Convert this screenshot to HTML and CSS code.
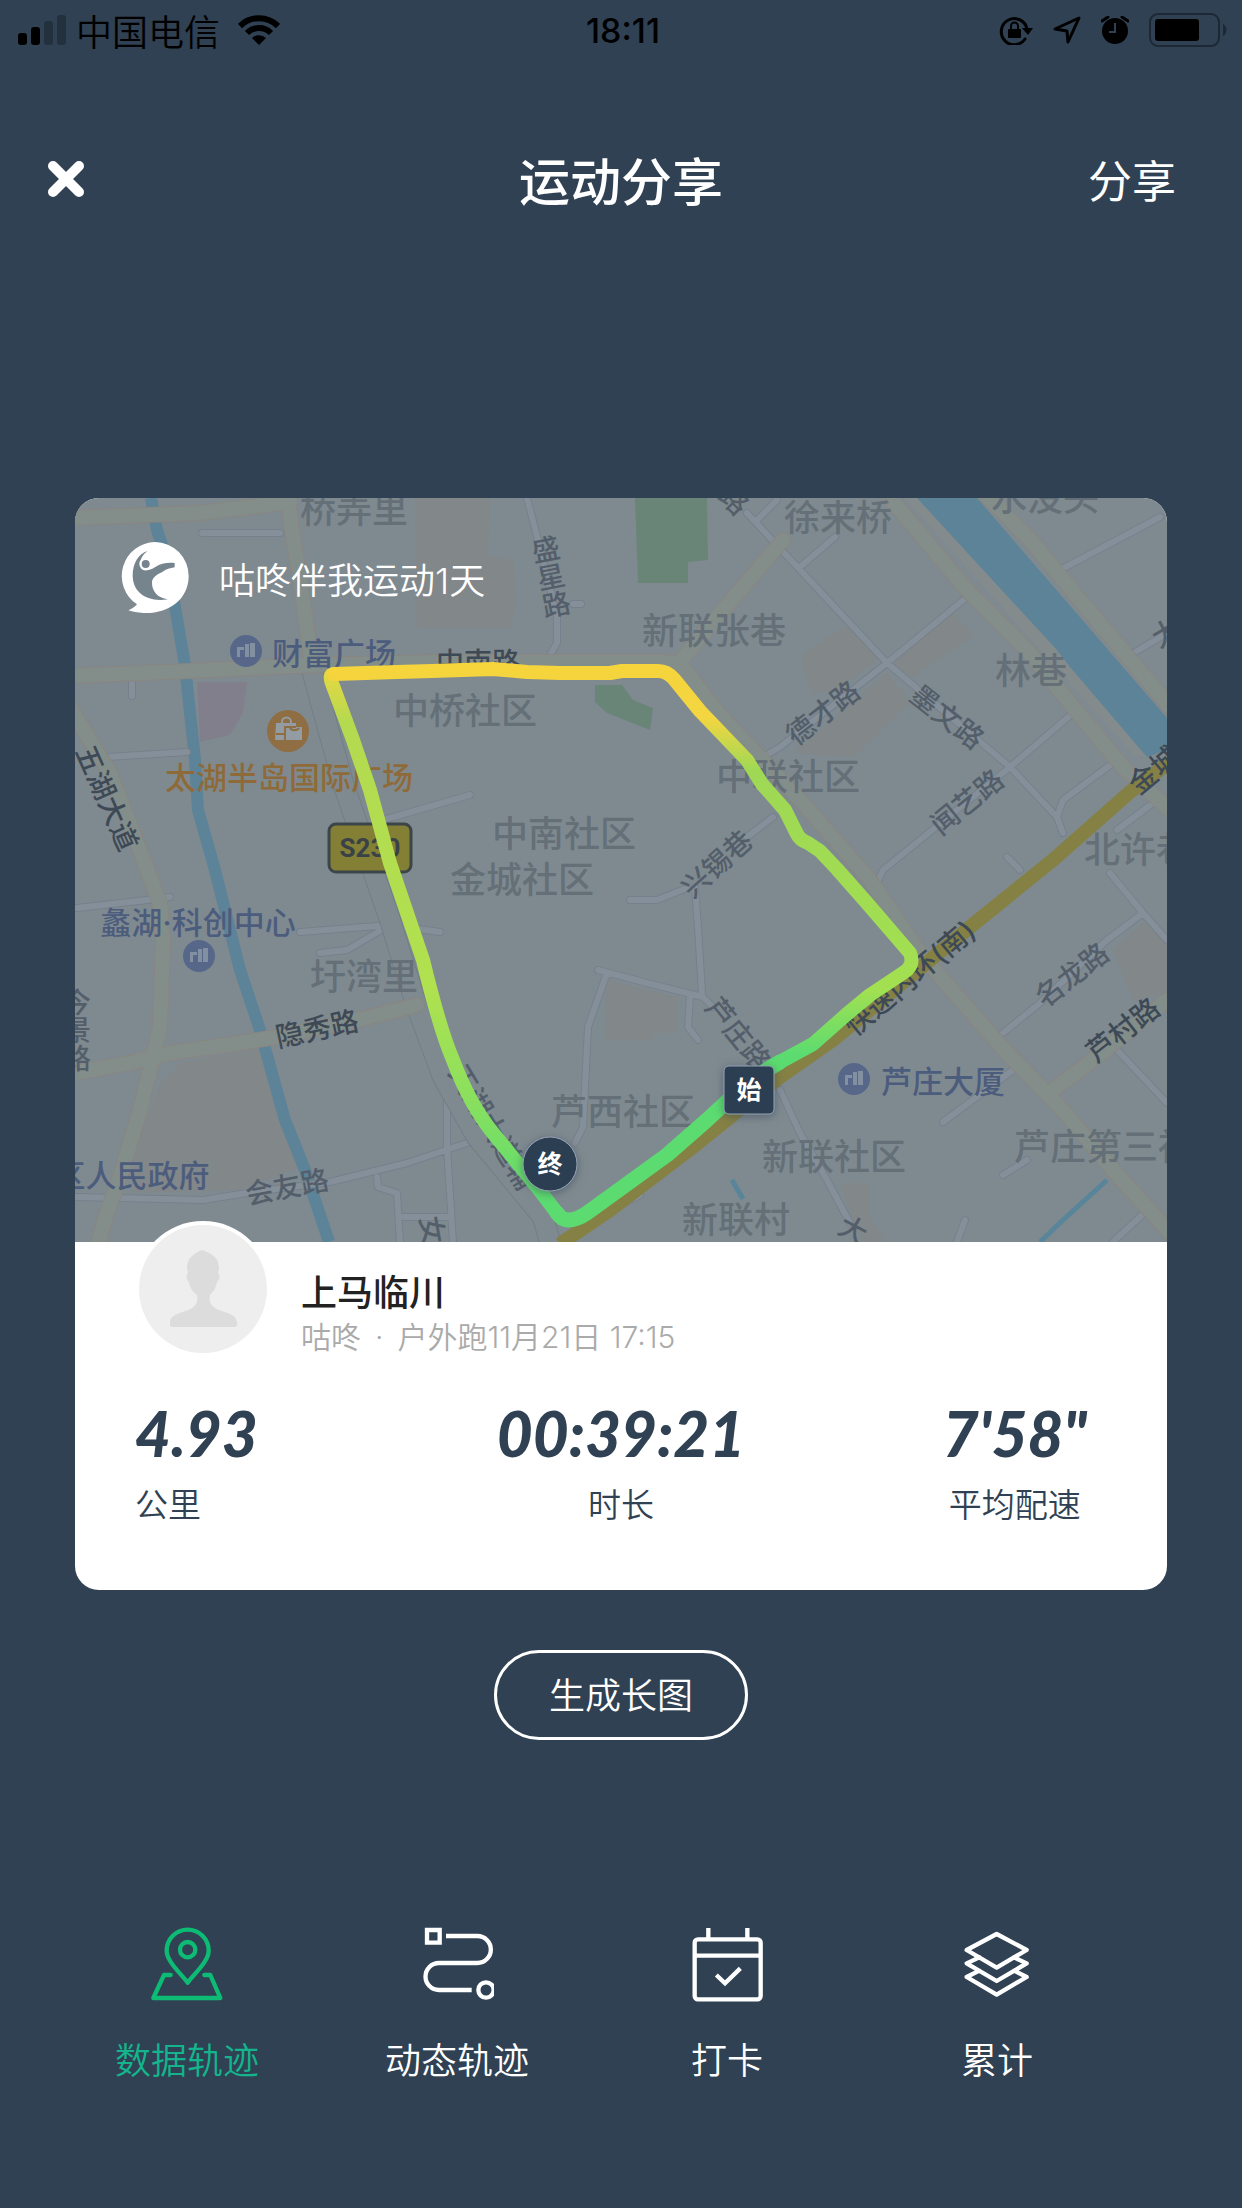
FILE: index.html
```html
<!doctype html>
<html lang="zh-CN">
<head>
	<meta charset="UTF-8">
	<meta name="viewport" content="width=device-width, initial-scale=1">
	<title>运动分享</title>
	<link rel="stylesheet" href="styles.css">
</head>
<body>
	<div class="status">
		<div class="status-left">
			<svg class="signal" viewBox="0 0 48 30" width="48" height="30">
				<rect x="0" y="18" width="9" height="12" rx="3"/>
				<rect x="13" y="12" width="9" height="18" rx="3"/>
				<rect class="off" x="26" y="6" width="9" height="24" rx="3"/>
				<rect class="off" x="39" y="0" width="9" height="30" rx="3"/>
			</svg>
			<span class="carrier">中国电信</span>
			<svg viewBox="0 0 42 30" width="42" height="30">
				<path d="M21 30l-7-7a10 10 0 0 1 14 0z"/>
				<path class="arc" d="M9 18a17 17 0 0 1 24 0M2 11a27 27 0 0 1 38 0"/>
			</svg>
		</div>
		<span class="time">18:11</span>
		<div class="status-right">
			<svg viewBox="0 0 34 30" width="34" height="30">
				<path class="line" d="M26 24A13 13 0 1 1 28 14"/>
				<path d="M23 13h11l-5 7z"/>
				<rect x="9" y="14" width="13" height="9" rx="1"/>
				<path class="thin" d="M12 14v-3a3 3 0 0 1 7 0v3"/>
			</svg>
			<svg class="locate" viewBox="0 0 28 28" width="28" height="28">
				<path class="line" d="M26 2L2 13l12 2 1 11z"/>
			</svg>
			<svg class="alarm" viewBox="0 0 28 28" width="28" height="28">
				<circle cx="14" cy="15" r="13"/>
				<path class="line" d="M1 5l6-4M27 5l-6-4"/>
				<path class="hand" d="M14 7v9H8"/>
			</svg>
			<svg class="battery" viewBox="0 0 79 34" width="79" height="34">
				<rect class="shell" x="1" y="1" width="69" height="32" rx="8"/>
				<rect x="6" y="6" width="44" height="22" rx="3"/>
				<path class="nub" d="M74 11a7 7 0 0 1 0 12z"/>
			</svg>
		</div>
	</div>

	<header class="nav">
		<button class="close" type="button" aria-label="关闭">
			<svg viewBox="0 0 36 36" width="36" height="36"><path d="M5 5l26 26M31 5L5 31"/></svg>
		</button>
		<h1>运动分享</h1>
		<button class="share" type="button">分享</button>
	</header>

	<main>
		<section class="card">
			<div class="map">
				<svg class="map-img" viewBox="75 498 1092 744">
					<defs>
						<linearGradient id="routeR" gradientUnits="userSpaceOnUse" x1="0" y1="670" x2="0" y2="1070">
							<stop offset="0" stop-color="#f5d43c"/>
							<stop offset=".12" stop-color="#f3d641"/>
							<stop offset=".25" stop-color="#9fd855"/>
							<stop offset=".8" stop-color="#a2e051"/>
							<stop offset=".96" stop-color="#5cdc70"/>
						</linearGradient>
						<linearGradient id="routeL" gradientUnits="userSpaceOnUse" x1="0" y1="670" x2="0" y2="1200">
							<stop offset="0" stop-color="#e8d842"/>
							<stop offset=".1" stop-color="#b4da50"/>
							<stop offset=".6" stop-color="#b0e14f"/>
							<stop offset=".8" stop-color="#8ce05d"/>
							<stop offset="1" stop-color="#5cdc70"/>
						</linearGradient>
						<g id="building">
							<circle r="16"/>
							<path d="M-9 6v-10h7v3h-4v7zM-1 6V-7h4V6zM4 6V-8h5V6z"/>
						</g>
						<path id="lanes" d="M527 498l11 42 19 77v26l-7 12M202 533h78M573 604h8M747 513l140 150 123 104 47 50 6 16M757 520l20-20M800 567l35-30M967 597l-80 66-107 84-17 10M1073 713l-63 54-127 103-6 13M1113 763l-50 37-6 17M1160 517l-100 53M1167 633l-40 24M1153 803l-36 27M1007 857l13 13M1110 873l33 40 24 27M1143 913l-36 27-67 63-37 30M1117 1050l50 53M943 1122l70-52M1003 1175l24-15M630 900h27l30-12M695 887l3 40 4 66M598 970l49 13 56 14 10 10M607 973l-19 54-5 100-8 16M690 997l-2 30 10 13M780 1090l20 43 27 47 23 43M773 817l-26 20M75 1197l128 3 44-7 83-11 77-19 63-21M447 1093v54l6 95M377 1177l1 10 19 6 3 49M403 1217h47M77 908l70-8 23-3M107 757l80-5M383 820l87-25M300 932l90-7 50 7M320 953l27-3 43-25M132 683v13M600 1215l40-20M1113 1242l30-28M957 1242l8-22"/>
						<path id="roads" d="M70 518l130-5 90-11M288 498l4 32 11 70 9 66M70 676l120-5 120-6 130-3h225l15 2 40 51 80 85 70 80 53 77 84 96 53 54 53 63 59 65M783 540l-60 70-43 52M890 498l77 92 60 60 46 57 50 60 50 46M985 494l48 49 47 57 90 107M68 704l42 69 27 70 23 60 3 40-3 84-7 30-13 53-20 67-13 36-9 30M75 1073l55-10 40-10 43-6 64-10 80-17 60-15M1053 1090l40-30 74-60"/>
						<path id="side" d="M312 670l31 113 47 137 27 87 26 70 34 60 66 80 7 25"/>
					</defs>
					<rect class="land" x="75" y="498" width="1092" height="744"/>

					<!-- 地块 -->
					<g class="block">
						<path d="M415 498h75l-2 59 25 3 3 40-5 28h-94z"/>
						<path d="M848 625l33 30-42 35-26 3-12-30 3-10zM906 643l47-30 20 22-60 42-20-12zM887 673l23 30-57 54-60-4 54-46z"/>
						<path d="M180 1063l87-16 36 120-66 23-104 3 2-43 25-65z"/>
						<path d="M605 980l73 17v36h-25v7h-48zM1147 920l20 23v50l-34 7-20-50zM840 1183h30v37l17 22h-27z"/>
					</g>
					<path class="park" d="M635 498h72l1 62-20 2v21h-50zM595 685h27l11 15 20 8-3 22-43-17-12-11z"/>
					<path class="mall" d="M197 682h50l-4 31-13 22-30 7z"/>

					<!-- 河道 -->
					<path class="bank" d="M905 498h15l150 160 78 99-14-2-82-92z"/>
					<path class="water" d="M917 498h60l190 220v32l-20 7-77-90-13-17z"/>
					<path class="river" d="M151 498l6 32 10 30 18 105 10 95 3 50 17 60 25 100 20 60 25 90 20 50 24 72"/>
					<path class="creek" d="M732 1180l11 19M1040 1242l23-22 44-40"/>

					<!-- 道路 -->
					<use class="lane-edge" href="#lanes"/>
					<use class="lane" href="#lanes"/>
					<use class="side-edge" href="#side"/>
					<use class="side" href="#side"/>
					<use class="road-edge" href="#roads"/>
					<use class="road" href="#roads"/>
					<path class="highway" d="M560 1244l50-34 83-63 87-70 53-37 137-113 83-67 77-68 40-30"/>

					<!-- 地名 -->
					<g class="area">
						<text x="354" y="510">桥弄里</text>
						<text x="838" y="518">徐来桥</text>
						<text x="1045" y="498">水没头</text>
						<text x="714" y="631">新联张巷</text>
						<text x="465" y="711">中桥社区</text>
						<text x="788" y="777">中联社区</text>
						<text x="564" y="834">中南社区</text>
						<text x="522" y="880">金城社区</text>
						<text x="1031" y="671">林巷</text>
						<text x="1138" y="850">北许巷</text>
						<text x="364" y="977">圩湾里</text>
						<text x="623" y="1112">芦西社区</text>
						<text x="834" y="1157">新联社区</text>
						<text x="736" y="1220">新联村</text>
						<text x="1122" y="1147">芦庄第三社区</text>
					</g>
					<g class="poi">
						<text x="334" y="653">财富广场</text>
						<text x="198" y="922">蠡湖·科创中心</text>
						<text x="132" y="1175">区人民政府</text>
						<text x="943" y="1081">芦庄大厦</text>
						<text class="shop" x="289" y="777">太湖半岛国际广场</text>
					</g>
					<g class="way">
						<text class="dark" transform="translate(107 798) rotate(66)">五湖大道</text>
						<text class="down" transform="translate(549 577) rotate(-11)">盛星路</text>
						<text class="dark" x="478" y="663">中南路</text>
						<text transform="translate(823 713) rotate(-38)">德才路</text>
						<text transform="translate(947 717) rotate(38)">墨文路</text>
						<text transform="translate(967 802) rotate(-39)">闻艺路</text>
						<text class="dark" transform="translate(1154 770) rotate(-40)">金城</text>
						<text class="dark" transform="translate(910 978) rotate(-40)">快速内环(南)</text>
						<text class="dark" transform="translate(317 1029) rotate(-12)">隐秀路</text>
						<text transform="translate(287 1187) rotate(-11)">会友路</text>
						<text transform="translate(492 1127) rotate(59)">天湖大道辅</text>
						<text transform="translate(717 864) rotate(-42)">兴锡巷</text>
						<text transform="translate(738 1034) rotate(51)">芦庄路</text>
						<text transform="translate(1072 975) rotate(-38)">名龙路</text>
						<text class="dark" transform="translate(1123 1030) rotate(-38)">芦村路</text>
						<text transform="translate(853 1230) rotate(28)">大</text>
						<text transform="translate(432 1230) rotate(80)">女</text>
						<text class="down" x="75" y="1030">今景路</text>
						<text transform="translate(734 500) rotate(45)">路</text>
						<text transform="translate(1166 633) rotate(-30)">大</text>
					</g>
					<use class="mark" href="#building" x="246" y="651"/>
					<use class="mark" href="#building" x="199" y="956"/>
					<use class="mark" href="#building" x="854" y="1079"/>
					<circle class="bag-bg" cx="288" cy="731" r="21"/>
					<path class="bag-handle" d="M282 724v-2a4 4 0 0 1 9 0v2"/>
					<path class="bag" d="M276 723h20v4h6v13h-27z"/>
					<path class="bag-line" d="M276 734h9M285 740v-13h11M290 728a5 4 0 0 0 9 0"/>
					<rect class="badge" x="329" y="824" width="82" height="48" rx="7"/>
					<text class="badge-text" x="370" y="848">S230</text>

					<!-- 运动轨迹 -->
					<path class="route" stroke="url(#routeL)" d="M568 1220Q562 1220 557 1213L537 1187 493 1133Q470 1105 453 1060 440 1030 423 960L390 863 370 790 353 740 333 686Q328 674 334 674"/>
					<path class="route" stroke="url(#routeR)" d="M334 674L397 672 432 671 493 669 527 672 560 673 610 673 622 671 658 671Q667 671 674 679L700 711 747 760 762 784 785 810 797 834Q800 840 808 843L820 851 837 869 867 903 910 953Q915 966 903 973L870 995 847 1014 813 1044 780 1062"/>
					<path class="route end" d="M780 1062L750 1080 707 1120 667 1155 627 1184 587 1213Q577 1220 568 1220 562 1220 557 1213"/>
					<circle class="pin" cx="550" cy="1164" r="27"/>
					<text class="pin-text" x="550" y="1164">终</text>
					<rect class="pin" x="724" y="1066" width="50" height="48" rx="5"/>
					<text class="pin-text" x="749" y="1090">始</text>
				</svg>
				<div class="brand">
					<svg viewBox="0 0 204 216" width="68" height="72">
						<path d="M102 0a102 102 0 0 1 101 102c0 70-60 114-136 111-18-1-32-3-45-8 12-5 20-11 26-18A102 102 0 0 1 102 0z"/>
						<path class="cut" d="M80 27C52 34 35 66 35 100c0 50 40 82 106 72-32-4-49-25-48-52 1-12 12-22 32-31 10-8 22-10 36-13v-13c-24-2-42 2-58 12-12 8-23 10-34 10-16-8-16-40 11-58z"/>
						<circle cx="74" cy="66" r="19"/>
						<circle class="cut" cx="74" cy="66" r="12"/>
					</svg>
					<span>咕咚伴我运动1天</span>
				</div>
			</div>
			<div class="info">
				<div class="user">
					<svg class="avatar" viewBox="0 0 136 136" width="136" height="136">
						<circle class="ring" cx="68" cy="68" r="68"/>
						<circle class="face" cx="68" cy="68" r="64"/>
						<path class="man" d="M67 29c10 3 17 8 17 18l-1 5c2 2 2 7-1 9-1 6-4 10-7 13-1 6 0 10 5 13 8 5 21 5 22 14v3q0 2-4 2H39q-4 0-4-2v-3c1-9 14-9 22-14 5-3 6-7 5-13-4-3-7-7-8-13-3-2-3-7-1-9l-1-5c0-10 7-15 15-18z"/>
					</svg>
					<div>
						<h2>上马临川</h2>
						<p>咕咚<span class="dot">·</span>户外跑11月21日 17:15</p>
					</div>
				</div>
				<dl class="stats">
					<div><dt>公里</dt><dd>4.93</dd></div>
					<div><dt>时长</dt><dd>00:39:21</dd></div>
					<div><dt>平均配速</dt><dd>7'58"</dd></div>
				</dl>
			</div>
		</section>
		<button class="long-pic" type="button">生成长图</button>
	</main>

	<nav class="tabs">
		<button class="on" type="button">
			<svg viewBox="0 0 222 228" width="74" height="76">
				<path d="M113 170C90 140 50 105 50 74a63 63 0 0 1 126 0c0 31-40 66-63 96z"/>
				<circle cx="113" cy="71" r="23"/>
				<path d="M62 147H42L10 216h201l-30-69h-18"/>
			</svg>
			<span>数据轨迹</span>
		</button>
		<button type="button">
			<svg viewBox="0 0 222 228" width="74" height="76">
				<path class="sharp" d="M21 12h38v38H21z"/>
				<path class="sharp" d="M78 30h94a40 40 0 0 1 0 81H57a40 40 0 0 0 0 81h98"/>
				<circle cx="198" cy="192" r="23"/>
			</svg>
			<span>动态轨迹</span>
		</button>
		<button type="button">
			<svg viewBox="0 0 222 228" width="74" height="76">
				<rect x="14" y="40" width="198" height="180" rx="10"/>
				<path class="sharp" d="M55 6v34M172 6v34M14 89h198M79 147l26 25 46-45"/>
			</svg>
			<span>打卡</span>
		</button>
		<button type="button">
			<svg viewBox="0 0 222 228" width="74" height="76">
				<path d="M110 24l90 48-90 53-90-53zM58 94l-38 18 90 53 90-53-38-18M58 134l-38 19 90 53 90-53-38-19"/>
			</svg>
			<span>累计</span>
		</button>
	</nav>
</body>
</html>
```
FILE: styles.css
```css
* { margin: 0; padding: 0; box-sizing: border-box;}
body { min-height: 100vh; background: #2f4153; color: #fff; font-family: Inter, "Noto Sans CJK SC", sans-serif; font-size: 36px; font-weight: 350;}
button { border: none; background: none; color: inherit; font: inherit; cursor: pointer;}
svg { display: block; flex: none;}

/* 状态栏 */
.status { display: grid; grid-template-columns: 1fr auto 1fr; align-items: center; height: 60px; padding: 0 14px 0 18px; color: #000;}
.status-left, .status-right { display: flex; align-items: center;}
.status-left { gap: 10px;}
.status-left svg:last-child { margin-left: 8px;}
.status-right { justify-content: flex-end; gap: 20px;}
.status .off { opacity: .25;}
.status .arc { fill: none; stroke: #000; stroke-width: 6;}
.status .line { fill: none; stroke: #000; stroke-width: 3; stroke-linejoin: round; stroke-linecap: round;}
.status .thin { fill: none; stroke: #000; stroke-width: 2;}
.status .hand { fill: none; stroke: #2f4153; stroke-width: 2;}
.status .shell { fill: none; stroke: #1c2833; stroke-width: 2;}
.status .nub { fill: #1c2833;}
.time { font-size: 34px; font-weight: 500;}

/* 标题栏 */
.nav { display: grid; grid-template-columns: 1fr auto 1fr; align-items: center; height: 238px; padding: 0 48px;}
.nav h1 { font-size: 51px; font-weight: 500;}
.close { justify-self: start;}
.close path { fill: none; stroke: #fff; stroke-width: 10; stroke-linecap: round;}
.share { justify-self: end; padding-right: 18px; font-size: 44px; font-weight: 400;}

main { padding: 200px 75px 0; text-align: center;}
.card { border-radius: 24px; background: #fff; overflow: hidden; text-align: left;}

/* 地图 */
.map { position: relative;}
.map-img { width: 100%; height: auto;}
.map text { text-anchor: middle; dominant-baseline: central;}
.land { fill: #7f8a90;}
.block { fill: #828789;}
.park { fill: #698577;}
.mall { fill: #827f8d;}
.bank { fill: #848b8d;}
.water { fill: #5c8397;}
.river { fill: none; stroke: #5c8397; stroke-width: 12;}
.creek { fill: none; stroke: #58859a; stroke-width: 5;}
.lane, .lane-edge, .road, .road-edge, .side, .side-edge { fill: none; stroke-linejoin: round; stroke-linecap: round;}
.lane-edge { stroke: #76808c; stroke-width: 8;}
.lane { stroke: #858f99; stroke-width: 6;}
.side-edge { stroke: #727d86; stroke-width: 22;}
.side { stroke: #7f8a90; stroke-width: 20;}
.road-edge { stroke: #8a8580; stroke-width: 16;}
.road { stroke: #838e8b; stroke-width: 14;}
.highway { fill: none; stroke: #858145; stroke-width: 14;}
.area { font-size: 36px; font-weight: 500; fill: #646f77;}
.poi { font-size: 31px; font-weight: 500; fill: #4c5c7d;}
.poi .shop { fill: #8f6a39;}
.way { font-size: 28px; font-weight: 500; fill: #535e6a;}
.way .dark { fill: #3e4956;}
.way .down { writing-mode: vertical-rl;}
.mark { fill: #56678a;}
#building path { fill: #8390a2;}
.bag-bg { fill: #8e6e42;}
.bag { fill: #929ca2;}
.bag-handle { fill: none; stroke: #929ca2; stroke-width: 2;}
.bag-line { fill: none; stroke: #8e6e42; stroke-width: 2;}
.badge { fill: #837f35; stroke: #3c4549; stroke-width: 3;}
.badge-text { font-family: Roboto, sans-serif; font-size: 26px; font-weight: 700; fill: #3a4247;}
.route { fill: none; stroke-width: 14; stroke-linejoin: round; stroke-linecap: round;}
.route.end { stroke: #5cdc70; stroke-width: 15;}
.pin { fill: #2b3e52; stroke: #97a3b4; stroke-width: 1; filter: drop-shadow(0 2px 5px rgba(43, 62, 82, .5));}
.pin-text { font-size: 25px; font-weight: 700; fill: #fff;}
.brand { position: absolute; top: 44px; left: 46px; display: flex; align-items: center; gap: 30px;}
.brand path, .brand circle { fill: #fff;}
.brand .cut { fill: #76848d;}

/* 运动数据 */
.info { padding: 0 60px 61px; color: #2f4153;}
.user { display: flex; align-items: flex-end; gap: 30px; margin-bottom: 40px;}
.avatar { position: relative; margin-top: -21px;}
.avatar .ring { fill: #fff;}
.avatar .face { fill: #eee;}
.avatar .man { fill: #dcdcdc;}
.user h2 { font-size: 36px; font-weight: 500; line-height: 48px; color: #222;}
.user p { font-size: 30px; line-height: 40px; color: #aaa;}
.user .dot { margin: 0 14px;}
.stats { display: grid; grid-template-columns: 1fr auto 1fr;}
.stats div { display: flex; flex-direction: column-reverse; gap: 12px; text-align: center;}
.stats div:first-child { text-align: left;}
.stats div:last-child { justify-self: end; padding-right: 20px;}
.stats dt { font-size: 33px; line-height: 48px;}
.stats dd { font: italic 900 62px/72px Lato, sans-serif;}

.long-pic { height: 90px; margin-top: 60px; padding: 0 52px 4px; border: 3px solid #fff; border-radius: 45px;}

/* 底部模板 */
.tabs { display: grid; grid-template-columns: repeat(4, 1fr); margin-top: 186px; padding: 0 110px 60px 52px;}
.tabs button { display: flex; flex-direction: column; align-items: center; gap: 33px; line-height: 52px;}
.tabs svg { fill: none; stroke: #fff; stroke-width: 13; stroke-linejoin: round; stroke-linecap: round;}
.tabs .sharp { stroke-linejoin: miter; stroke-linecap: butt;}
.tabs .on { color: #14b48c;}
.tabs .on svg { stroke: #0dbb74;}
```
